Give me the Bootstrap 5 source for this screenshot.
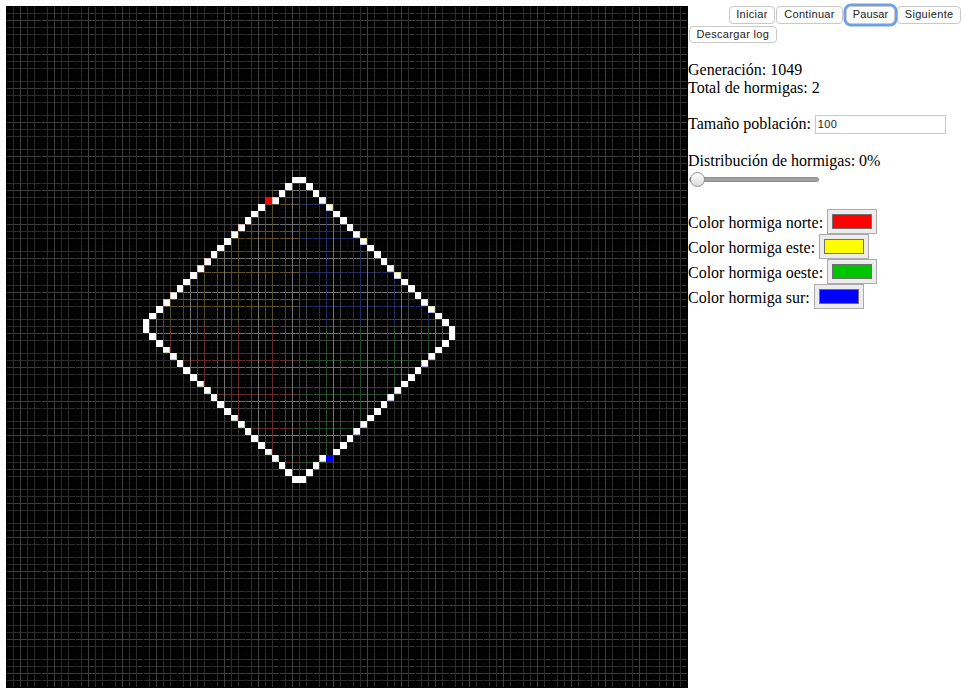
<!DOCTYPE html>
<html lang="es">
<head>
<meta charset="utf-8">
<title>Hormigas</title>
<link href="https://cdn.jsdelivr.net/npm/bootstrap@5.3.0/dist/css/bootstrap.min.css" rel="stylesheet">
<style>
body{margin:0;background:#fff;color:#000;font:16px/18px "Liberation Serif","Times New Roman",serif;}
.shell{padding:6px 0 10px 6px;}
#world{display:block;width:682px;height:682px;background:#000;flex:none;}
.side{width:277px;flex:none;}
.ctl{font:11px/15px "Liberation Sans",Arial,sans-serif;letter-spacing:.32px;color:#222;background:#fff;border:1px solid #c9c9c9;border-radius:4px;height:17.5px;padding:0 7px;margin:0;}
.ctl-row{padding-right:4px;}
.ctl-tight{padding:0 6.5px;}
.ctl-next{margin-left:1px;}
.ctl-wide{margin:2px 0 0 1px;padding:0 6.5px;}
.ctl-on{box-shadow:0 0 0 2.5px #6c9fec;border-radius:5px;position:relative;margin:0 2px 0 3px;padding:0 6px;letter-spacing:.1px;}
.stats{margin-top:17.5px;}
.pop{margin-top:18px;height:20px;}
.pop input{width:131px;height:19px;border:1px solid #c8c8c8;padding:0 2px;margin:0;font:11px "Liberation Sans",Arial,sans-serif;letter-spacing:.3px;color:#222;vertical-align:top;}
.dist{margin-top:17px;}
.slide{appearance:none;-webkit-appearance:none;display:block;width:130px;height:16px;margin:2px 0 0 1px;padding:0;background:transparent;}
.slide::-webkit-slider-runnable-track{height:5px;background:#a2a2a2;border:1px solid #8c8c8c;border-radius:2.5px;}
.slide::-webkit-slider-thumb{-webkit-appearance:none;width:15px;height:15px;margin-top:-6px;border-radius:50%;border:1px solid #8f8f8f;background:linear-gradient(#fff,#dcdcdc);}
.tints{margin-top:21px;}
.tint-row{height:25px;line-height:27px;white-space:nowrap;}
.tint{-webkit-appearance:none;appearance:none;width:50px;height:25px;padding:0;margin:0;background:#ececec;border:1px solid #ababab;vertical-align:top;}
.tint::-webkit-color-swatch-wrapper{padding:4px;}
.tint::-webkit-color-swatch{border:1px solid #707070;border-radius:0;}
</style>
</head>
<body>
<div class="shell d-flex align-items-start">
  <canvas id="world" width="682" height="682"></canvas>
  <div class="side">
    <div class="ctl-row d-flex justify-content-end">
      <button class="ctl ctl-tight">Iniciar</button>
      <button class="ctl ctl-next">Continuar</button>
      <button class="ctl ctl-on">Pausar</button>
      <button class="ctl ctl-tight">Siguiente</button>
    </div>
    <button class="ctl ctl-wide">Descargar log</button>
    <div class="stats">Generación: 1049<br>Total de hormigas: 2</div>
    <div class="pop">Tamaño población: <input type="text" value="100"></div>
    <div class="dist">Distribución de hormigas: 0%</div>
    <input class="slide" type="range" min="0" max="100" value="0">
    <div class="tints">
      <div class="tint-row">Color hormiga norte: <input class="tint" type="color" value="#ff0000"></div>
      <div class="tint-row">Color hormiga este: <input class="tint" type="color" value="#ffff00"></div>
      <div class="tint-row">Color hormiga oeste: <input class="tint" type="color" value="#00c400"></div>
      <div class="tint-row">Color hormiga sur: <input class="tint" type="color" value="#0000ff"></div>
    </div>
  </div>
</div>
<script>
(function(){
  var ctx=document.getElementById('world').getContext('2d');
  function p(k){return Math.round(6.5+6.8*k)-6;}
  var N=100;
  function inside(c,r){return c+r>=66&&r-c<=27&&c+r<=113&&c-r<=18;}
  var leftV=[23,24,28,29,33,34,38,39],rightV=[46,47,51,52,56,57,61,62];
  var topH=[28,29,33,34,38,39,43,44],botH=[51,52,56,57,61,62,66,67];
  var C={olive:'#504c26',brown:'#645026',blue:'#2a2a62',red:'#662a2a',green:'#224e2c'};
  function gray(k,r,inn){
    var m=k%5,b=k<45?2:3,v;
    if(m===0)v=inn?10:5;
    else if(m===b)v=inn?112:62;
    else v=inn?68:44;
    return 'rgb('+v+','+v+','+v+')';
  }
  ctx.fillStyle='#000';ctx.fillRect(0,0,682,682);
  function vColor(k,r){
    if(!inside(k,r))return gray(k,r,false);
    if(leftV.indexOf(k)>=0)return r<47?C.olive:C.red;
    if(k===43&&r>=47)return C.red;
    if(rightV.indexOf(k)>=0)return r<47?C.blue:C.green;
    return gray(k,r,true);
  }
  function hColor(k,c){
    if(!inside(c,k))return gray(k,c,false);
    if(topH.indexOf(k)>=0)return c<43?C.brown:C.blue;
    if(botH.indexOf(k)>=0)return c<43?C.red:C.green;
    return gray(k,c,true);
  }
  var k,i;
  for(k=1;k<N;k++)for(i=0;i<N;i++){
    ctx.fillStyle=hColor(k,i);ctx.fillRect(p(i),p(k),p(i+1)-p(i),1);
  }
  for(k=1;k<N;k++)for(i=0;i<N;i++){
    ctx.fillStyle=vColor(k,i);ctx.fillRect(p(k),p(i),1,p(i+1)-p(i));
  }
  var cells=[];
  function add(c,r,col){cells.push([c,r,col||'#fff']);}
  add(42,25);add(43,25);
  for(var c=41;c>=39;c--)add(c,67-c);
  add(38,28,'#ff0000');
  for(c=37;c>=21;c--)add(c,66-c);
  add(20,46);add(20,47);
  for(c=21;c<=42;c++)add(c,c+27);
  add(43,69);
  for(c=44;c<=46;c++)add(c,112-c);
  add(47,66,'#0000ff');
  for(c=48;c<=64;c++)add(c,113-c);
  add(65,47);add(65,48);
  for(c=44;c<=64;c++)add(c,c-18);
  cells.forEach(function(e){
    var x=p(e[0]),y=p(e[1]),w=p(e[0]+1)-x,h=p(e[1]+1)-y,cc=e[0],rr=e[1];
    ctx.fillStyle=e[2];
    ctx.fillRect(x,y,w,h);
    if(e[2]!=='#fff')return;
    var m=cc%5;
    if(cc<43&&rr<47&&(m===3||m===4)){ctx.fillStyle='#e6bcbc';ctx.fillRect(x,y,w,1);ctx.fillRect(x,y,1,h);}
    else if(cc<43&&rr>=47&&(m===3||m===4)){ctx.fillStyle='#b6d8b8';ctx.fillRect(x,y+h-1,w,1);ctx.fillRect(x+w-1,y,1,h);}
    else if(cc>=43&&rr<47&&(m===1||m===2)){ctx.fillStyle='#e2e2a8';ctx.fillRect(x,y,w,1);ctx.fillRect(x+w-1,y,1,h);ctx.fillStyle='#bcbce2';ctx.fillRect(x,y+h-1,w,1);}
    else if(cc>=43&&rr>=47&&(m===1||m===2)){ctx.fillStyle='#b8b8e2';ctx.fillRect(x,y+h-1,w,1);ctx.fillRect(x,y,1,h);}
  });
})();
</script>
</body>
</html>
